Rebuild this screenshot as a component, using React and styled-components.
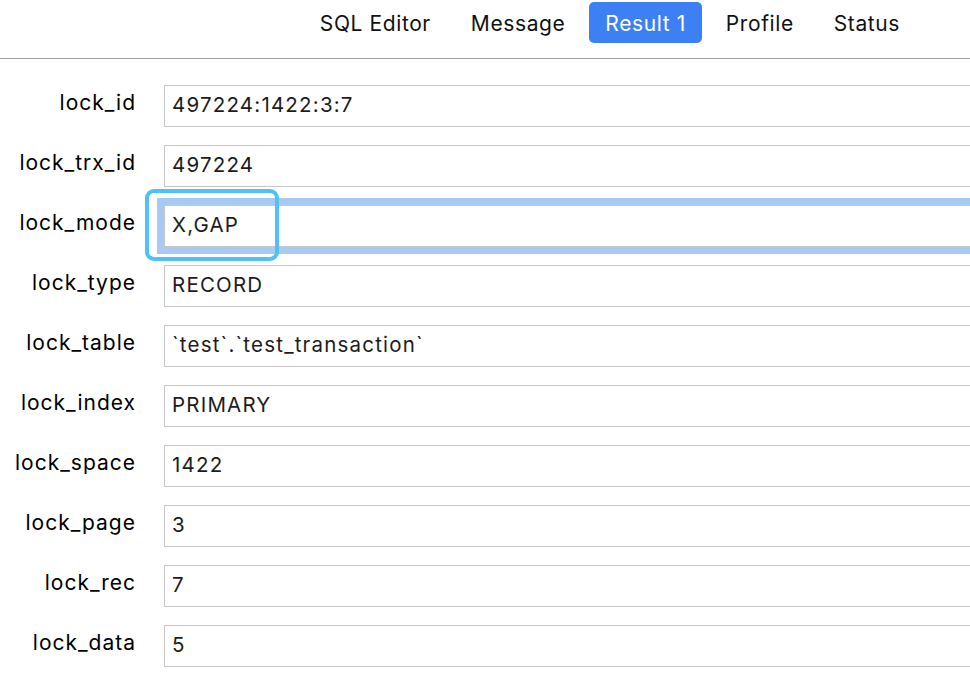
import React from 'react';
import styled, { createGlobalStyle } from 'styled-components';

const GlobalStyle = createGlobalStyle`
  html, body {
    margin: 0;
    padding: 0;
    background: #ffffff;
  }
  body {
    font-family: Inter, "Liberation Sans", Arial, sans-serif;
    overflow: hidden;
  }
`;

const Page = styled.div`
  width: 970px;
  height: 678px;
  overflow: hidden;
  background: #fff;
`;

const TabBar = styled.div`
  height: 59px;
  display: flex;
  align-items: flex-start;
  justify-content: flex-end;
  gap: 8px;
  padding: 2px 54px 0 0;
  box-sizing: border-box;
  border-bottom: 1px solid #a0a0a0;
`;

const Tab = styled.div`
  height: 41px;
  display: flex;
  align-items: center;
  padding: 1px 16px 0;
  box-sizing: border-box;
  border-radius: 5px;
  font-size: 21px;
  letter-spacing: 0.6px;
  color: ${({ $active }) => ($active ? '#ffffff' : '#111111')};
  background: ${({ $active }) => ($active ? '#3d80f4' : 'transparent')};
`;

const Form = styled.div`
  display: flex;
  flex-direction: column;
  gap: 18px;
  padding-top: 26px;
`;

const Row = styled.div`
  display: grid;
  grid-template-columns: 136px 900px;
  column-gap: 28px;
  align-items: center;
  height: 42px;
`;

const Label = styled.div`
  text-align: right;
  font-size: 21px;
  color: #000;
  margin-top: -8px;
  letter-spacing: 1px;
`;

const Field = styled.div`
  position: relative;
  height: 42px;
  box-sizing: border-box;
  border: 1px solid #c6c6c6;
  display: flex;
  align-items: center;
  padding: 0 7px 3px;
  font-size: 20.5px;
  letter-spacing: 1.2px;
  color: #1c1c1c;
  background: #fff;
  box-shadow: ${({ $focused }) => ($focused ? '0 0 0 7px #a9c9f5' : 'none')};
`;

const Callout = styled.div`
  position: absolute;
  left: -20px;
  top: -17px;
  width: 134px;
  height: 72px;
  box-sizing: border-box;
  border: 4px solid #4fc1f5;
  border-radius: 9px;
  pointer-events: none;
`;

const tabs = ['SQL Editor', 'Message', 'Result 1', 'Profile', 'Status'];

const rows = [
  ['lock_id', '497224:1422:3:7'],
  ['lock_trx_id', '497224'],
  ['lock_mode', 'X,GAP'],
  ['lock_type', 'RECORD'],
  ['lock_table', '`test`.`test_transaction`'],
  ['lock_index', 'PRIMARY'],
  ['lock_space', '1422'],
  ['lock_page', '3'],
  ['lock_rec', '7'],
  ['lock_data', '5'],
];

export default function App() {
  return (
    <Page>
      <GlobalStyle />
      <TabBar>
        {tabs.map((t) => (
          <Tab key={t} $active={t === 'Result 1'}>
            {t}
          </Tab>
        ))}
      </TabBar>
      <Form>
        {rows.map(([name, value]) => (
          <Row key={name}>
            <Label>{name}</Label>
            <Field $focused={name === 'lock_mode'}>
              {value}
              {name === 'lock_mode' && <Callout />}
            </Field>
          </Row>
        ))}
      </Form>
    </Page>
  );
}
